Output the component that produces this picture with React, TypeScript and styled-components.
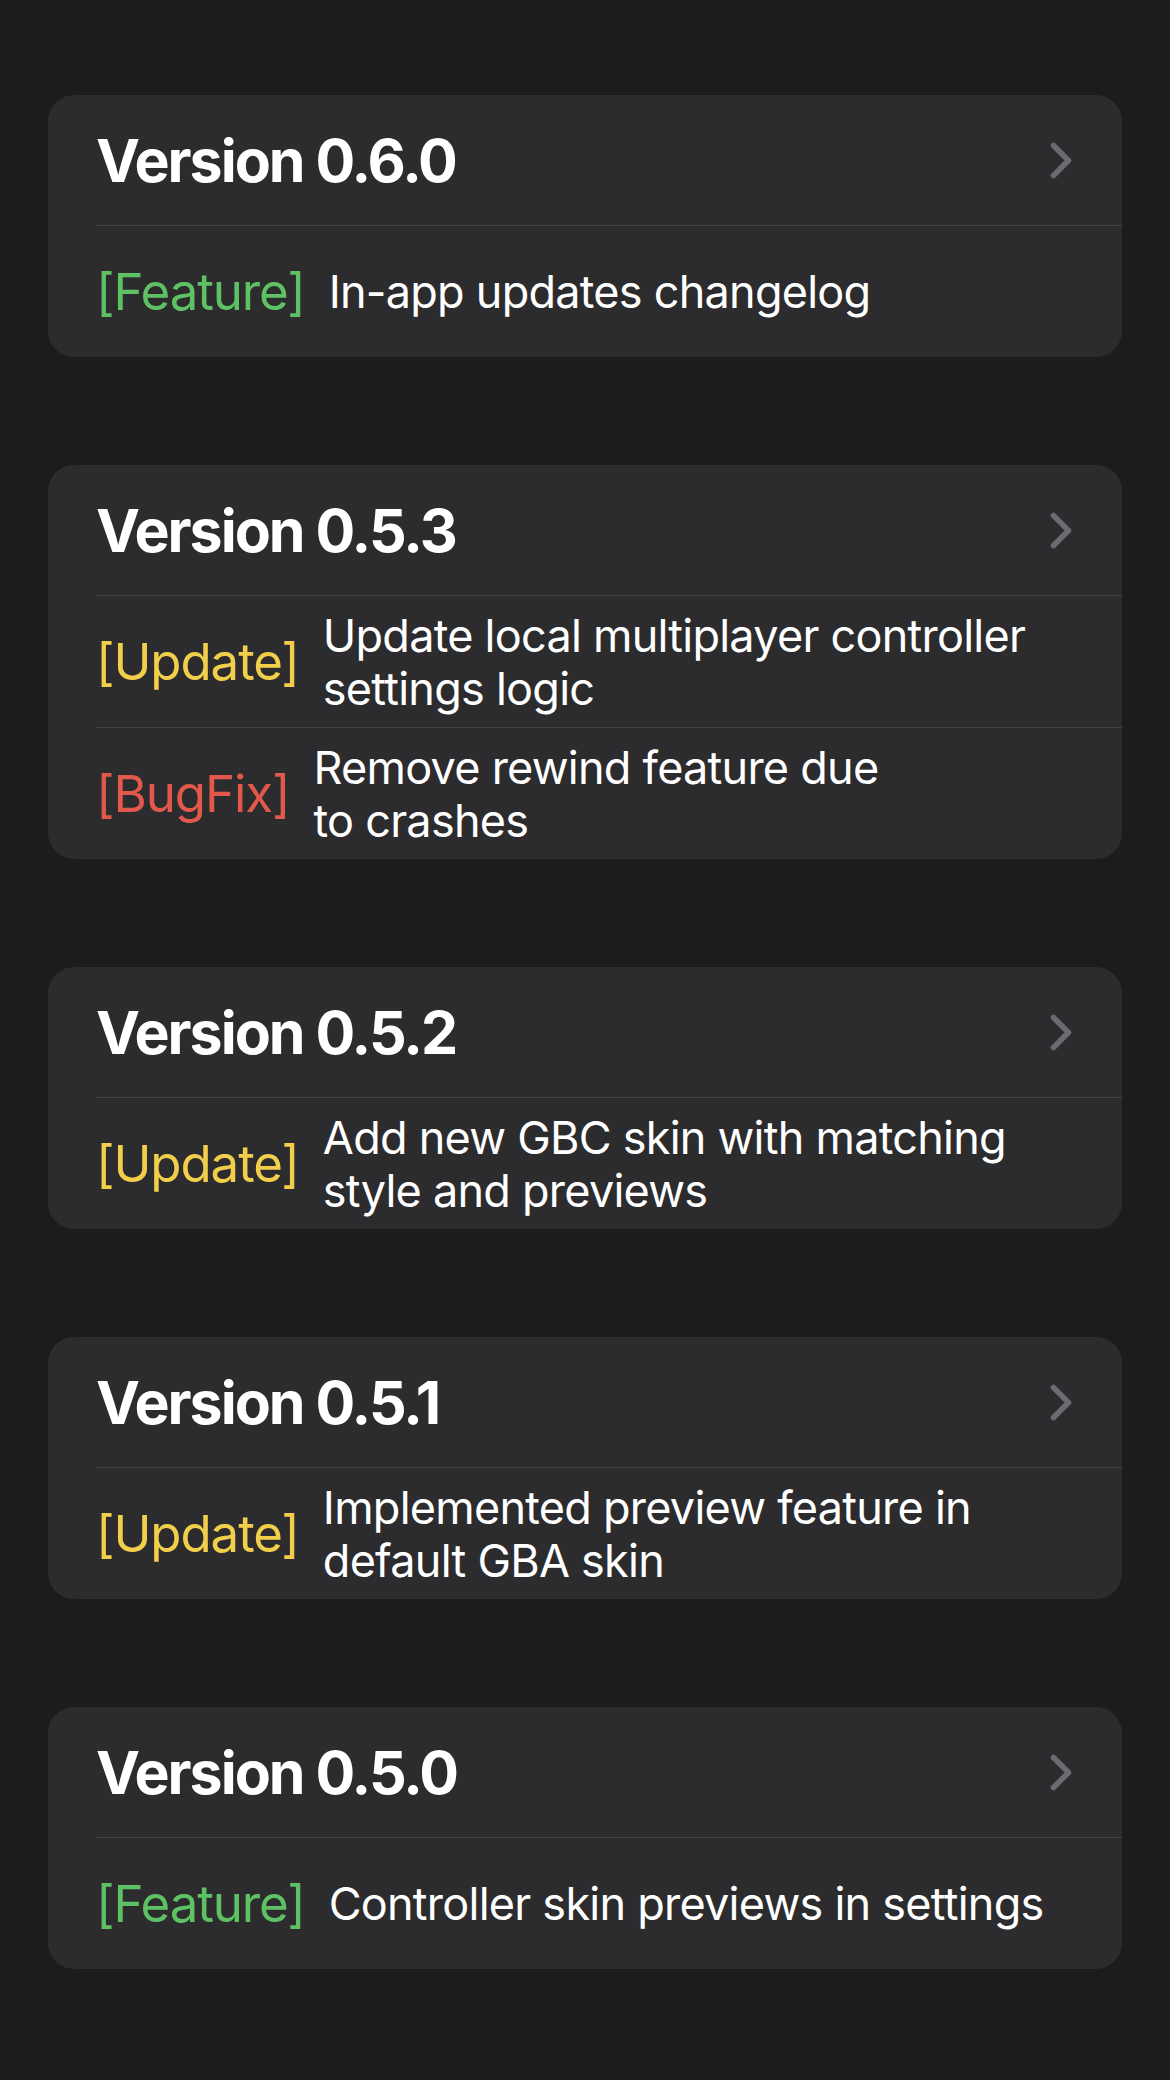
import styled, { createGlobalStyle } from "styled-components";

type Kind = "Feature" | "Update" | "BugFix";

interface Change {
  kind: Kind;
  lines: string[];
}

interface Release {
  version: string;
  changes: Change[];
}

const releases: Release[] = [
  {
    version: "Version 0.6.0",
    changes: [{ kind: "Feature", lines: ["In-app updates changelog"] }],
  },
  {
    version: "Version 0.5.3",
    changes: [
      {
        kind: "Update",
        lines: ["Update local multiplayer controller", "settings logic"],
      },
      { kind: "BugFix", lines: ["Remove rewind feature due", "to crashes"] },
    ],
  },
  {
    version: "Version 0.5.2",
    changes: [
      {
        kind: "Update",
        lines: ["Add new GBC skin with matching", "style and previews"],
      },
    ],
  },
  {
    version: "Version 0.5.1",
    changes: [
      {
        kind: "Update",
        lines: ["Implemented preview feature in", "default GBA skin"],
      },
    ],
  },
  {
    version: "Version 0.5.0",
    changes: [
      { kind: "Feature", lines: ["Controller skin previews in settings"] },
    ],
  },
];

const tagColors: Record<Kind, string> = {
  Feature: "#5ec264",
  Update: "#f2cf4b",
  BugFix: "#e2584b",
};

const GlobalStyle = createGlobalStyle`
  html, body {
    margin: 0;
    padding: 0;
    background: #1c1c1e;
  }
  body {
    font-family: Inter, "Noto Sans", "Liberation Sans", sans-serif;
    color: #fff;
    -webkit-font-smoothing: antialiased;
  }
`;

const Page = styled.main`
  display: flex;
  flex-direction: column;
  gap: 108px;
  padding: 95px 48px 120px;
`;

const Card = styled.section`
  background: #2c2c2e;
  border-radius: 26px;
  overflow: hidden;
`;

const Header = styled.div`
  height: 130px;
  display: flex;
  align-items: center;
  justify-content: space-between;
  padding: 0 50px 0 48px;
`;

const Title = styled.h2`
  margin: 0;
  font-size: 59px;
  font-weight: 700;
  letter-spacing: -2px;
  line-height: 1;
  color: #fff;
`;

const Chevron = styled.svg`
  width: 22px;
  height: 37px;
  color: #6c6c70;
  flex: none;
`;

const Row = styled.div`
  min-height: 131px;
  margin-left: 48px;
  border-top: 1px solid #434346;
  display: flex;
  align-items: center;
  gap: 24px;
  padding-right: 40px;
`;

const Tag = styled.span<{ $kind: Kind }>`
  flex: none;
  font-size: 51px;
  line-height: 1;
  letter-spacing: -1.1px;
  color: ${(p) => tagColors[p.$kind]};
`;

const Description = styled.p`
  margin: 0;
  font-size: 45px;
  line-height: 53px;
  letter-spacing: -0.75px;
  color: #fff;
`;

const Line = styled.span`
  display: block;
  white-space: nowrap;
`;

export default function App() {
  return (
    <>
      <GlobalStyle />
      <Page>
        {releases.map((release) => (
          <Card key={release.version}>
            <Header>
              <Title>{release.version}</Title>
              <Chevron viewBox="0 0 22 37" fill="none" aria-hidden="true">
                <path
                  d="M3.5 3.5 L18.5 18.5 L3.5 33.5"
                  stroke="currentColor"
                  strokeWidth="5.5"
                  strokeLinecap="round"
                  strokeLinejoin="round"
                />
              </Chevron>
            </Header>
            {release.changes.map((change, i) => (
              <Row key={i}>
                <Tag $kind={change.kind}>[{change.kind}]</Tag>
                <Description>
                  {change.lines.map((line) => (
                    <Line key={line}>{line}</Line>
                  ))}
                </Description>
              </Row>
            ))}
          </Card>
        ))}
      </Page>
    </>
  );
}
